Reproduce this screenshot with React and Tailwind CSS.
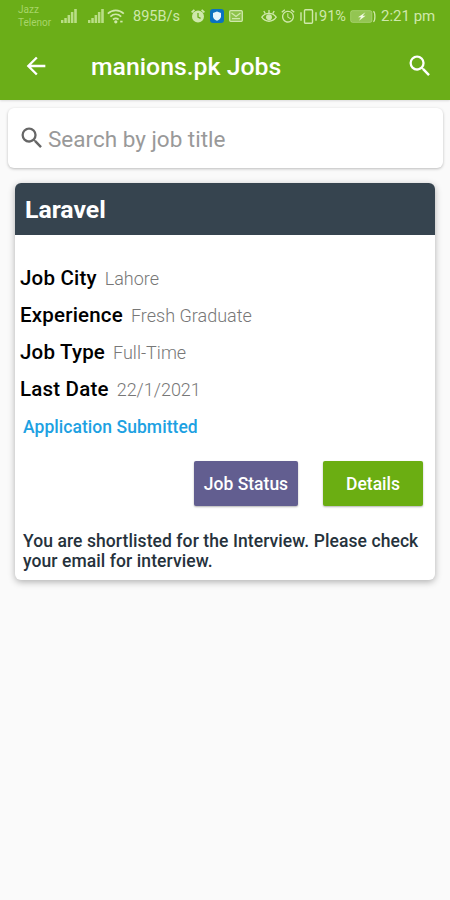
import { MdArrowBack, MdSearch, MdAlarm } from "react-icons/md";

const details = [
  { label: "Job City", value: "Lahore" },
  { label: "Experience", value: "Fresh Graduate" },
  { label: "Job Type", value: "Full-Time" },
  { label: "Last Date", value: "22/1/2021" },
];

function SignalIcon({ className }) {
  return (
    <svg className={className} width="16" height="14" viewBox="0 0 16 14" fill="currentColor">
      <rect x="0" y="11" width="2.4" height="3" />
      <rect x="3.3" y="9" width="2.5" height="5" />
      <rect x="6.6" y="6" width="2.5" height="8" />
      <rect x="9.9" y="3" width="2.5" height="11" />
      <rect x="13.2" y="0" width="2.6" height="14" />
    </svg>
  );
}

function WifiIcon({ className }) {
  return (
    <svg className={className} width="18" height="15" viewBox="0 0 18 15" fill="none" stroke="currentColor" strokeWidth="1.7">
      <path d="M0.8 4.6C5.4 0.2 12.2 0.2 16.8 4.6M3.4 7.6C6.6 4.6 11 4.6 14.2 7.6M6 10.5c1.7-1.5 3.9-1.5 5.6 0" />
      <circle cx="8.8" cy="12.8" r="0.8" fill="currentColor" />
      <path d="M13.2 12.6h2.4" />
    </svg>
  );
}

function ClockBadge({ className }) {
  return (
    <svg className={className} width="14" height="14" viewBox="0 0 14 14">
      <path d="M0.6 3.4 3.4 0.8M13.4 3.4 10.6 0.8" stroke="currentColor" strokeWidth="1.8" />
      <circle cx="7" cy="7.5" r="6" fill="currentColor" />
      <path d="M7 4v4l2.6 1.3" fill="none" stroke="#6bae18" strokeWidth="1.3" />
    </svg>
  );
}

function ShieldBadge({ className }) {
  return (
    <svg className={className} width="14" height="14" viewBox="0 0 14 14">
      <rect width="14" height="14" rx="3" fill="#0a72c0" />
      <path d="M7 2.6 11 4v3.2c0 2.3-1.7 3.6-4 4.6-2.3-1-4-2.3-4-4.6V4z" fill="#e4f5fb" />
    </svg>
  );
}

function MailIcon({ className }) {
  return (
    <svg className={className} width="14" height="12" viewBox="0 0 14 12">
      <rect x="0.7" y="0.7" width="12.6" height="10.6" rx="1" fill="currentColor" fillOpacity="0.35" stroke="currentColor" strokeWidth="1.3" />
      <path d="M2.5 3 7 6.4 11.5 3M3 8.6h8" fill="none" stroke="currentColor" strokeWidth="1.3" />
    </svg>
  );
}

function EyeIcon({ className }) {
  return (
    <svg className={className} width="16" height="14" viewBox="0 0 16 14" fill="none" stroke="currentColor" strokeWidth="1.3">
      <path d="M0.8 8.2C4.5 3.2 11.5 3.2 15.2 8.2 11.5 13.6 4.5 13.6 0.8 8.2z" />
      <circle cx="8" cy="8.2" r="2.3" fill="currentColor" />
      <path d="M8 4V1M4.3 4.6 2.8 2M11.7 4.6 13.2 2" />
    </svg>
  );
}

function VibrateIcon({ className }) {
  return (
    <svg className={className} width="17" height="15" viewBox="0 0 17 15" fill="none" stroke="currentColor" strokeWidth="1.4">
      <rect x="4.5" y="0.8" width="8" height="13.4" rx="1" />
      <path d="M1 3.3v8.4M16 3.3v8.4" />
    </svg>
  );
}

function BatteryIcon({ className }) {
  return (
    <svg className={className} width="26" height="13" viewBox="0 0 26 13">
      <rect x="0.6" y="0.6" width="21.4" height="11.8" rx="2" fill="currentColor" fillOpacity="0.4" stroke="currentColor" strokeOpacity="0.4" />
      <path d="M23.4 1.2c2 1.4 2 9.2 0 10.6" fill="none" stroke="currentColor" strokeWidth="1.3" />
      <path d="M15.5 2.2 8 7.3h3L9 10.8l6.6-5h-3z" fill="#f2fae6" />
    </svg>
  );
}

function StatusBar() {
  return (
    <div className="flex h-8 items-center pl-[18px] text-[#cfe8ab]">
      <div className="w-[43px] shrink-0 text-[10px] leading-[13px] text-[#a8d56a]">
        <div>Jazz</div>
        <div>Telenor</div>
      </div>
      <SignalIcon className="shrink-0 text-[#b9de86]" />
      <SignalIcon className="ml-[11px] shrink-0 text-[#b9de86]" />
      <WifiIcon className="ml-[3px] shrink-0" />
      <span className="ml-2 w-[49px] shrink-0 pt-px text-[14.5px] whitespace-nowrap">895B/s</span>
      <ClockBadge className="ml-[9px] shrink-0" />
      <ShieldBadge className="ml-[5px] shrink-0" />
      <MailIcon className="ml-[5px] shrink-0" />
      <EyeIcon className="ml-[18px] shrink-0" />
      <MdAlarm className="ml-[3px] size-4 shrink-0" />
      <VibrateIcon className="ml-1 shrink-0" />
      <span className="ml-[2px] w-[30px] shrink-0 pt-px text-[14.5px]">91%</span>
      <BatteryIcon className="ml-[1px] shrink-0" />
      <span className="ml-[5px] pt-px text-[15px] whitespace-nowrap">2:21 pm</span>
    </div>
  );
}

function JobCard() {
  return (
    <div className="mx-[15px] mt-[15px] h-[397px] overflow-hidden rounded-[6px] bg-white shadow-[0_2px_7px_rgba(0,0,0,0.3)]">
      <h2 className="h-[52px] bg-[#36444f] pl-[10px] text-[24.8px] leading-[54px] font-bold text-white">
        Laravel
      </h2>
      <div className="pt-[25px] pl-[5px]">
        {details.map((item) => (
          <div key={item.label} className="flex h-[37px] items-center">
            <span className="text-[20.5px] font-medium tracking-[0.2px] text-black">{item.label}</span>
            <span className="ml-[8px] text-[18px] font-light text-[#777]">{item.value}</span>
          </div>
        ))}
      </div>
      <div className="ml-2 h-[37px] text-[17.5px] leading-[38px] font-medium tracking-[0.05px] text-[#1da1e2]">
        Application Submitted
      </div>
      <div className="mt-[16px] flex justify-end gap-[25px] pr-3">
        <button className="h-[45px] w-[104px] rounded-[2px] bg-[#625e90] pt-[2px] text-[17.5px] font-medium text-white shadow-[0_1px_2px_rgba(0,0,0,0.3)]">
          Job Status
        </button>
        <button className="h-[45px] w-[100px] rounded-[2px] bg-[#6bae12] pt-[2px] text-[17.5px] font-medium text-white shadow-[0_1px_2px_rgba(0,0,0,0.3)]">
          Details
        </button>
      </div>
      <p className="mt-[25px] ml-2 text-[17.5px] leading-[20px] font-medium tracking-[0.08px] whitespace-nowrap text-[#26323c]">
        You are shortlisted for the Interview. Please check
        <br />
        your email for interview.
      </p>
    </div>
  );
}

export default function App() {
  return (
    <div className="h-[900px] w-[450px] overflow-hidden bg-[#fafafa] font-['Roboto',sans-serif]">
      <header className="h-[100px] bg-[#6bae18] shadow-[0_1px_2px_rgba(0,0,0,0.12)]">
        <StatusBar />
        <div className="flex h-[68px] items-center pr-4 pl-[22px] text-white">
          <MdArrowBack className="size-7" />
          <h1 className="ml-[41px] pt-[2px] text-[24.8px] font-medium">manions.pk Jobs</h1>
          <MdSearch className="ml-auto size-7" />
        </div>
      </header>
      <div className="mx-2 mt-2 flex h-[60px] w-[435px] items-center rounded-[6px] bg-white pl-[10px] shadow-[0_1px_3px_rgba(0,0,0,0.25)]">
        <MdSearch className="size-7 text-[#666]" />
        <span className="ml-[2px] pt-[3px] text-[22.5px] text-[#999]">Search by job title</span>
      </div>
      <JobCard />
    </div>
  );
}
